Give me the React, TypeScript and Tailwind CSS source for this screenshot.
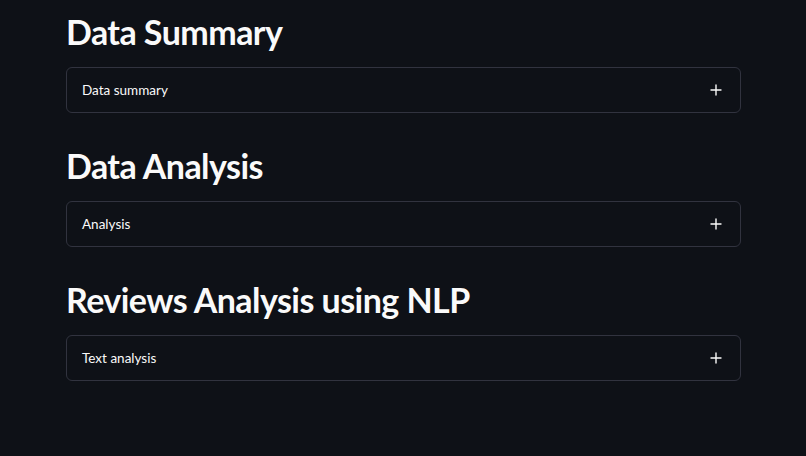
import React from 'react';

const sections = [
  { title: 'Data Summary', label: 'Data summary' },
  { title: 'Data Analysis', label: 'Analysis' },
  { title: 'Reviews Analysis using NLP', label: 'Text analysis' },
];

const PlusIcon = () => (
  <svg width="12" height="12" viewBox="0 0 12 12" fill="none">
    <path d="M6 1v10M1 6h10" stroke="#fafafa" strokeWidth="1.4" strokeLinecap="round" />
  </svg>
);

export default function App() {
  return (
    <div
      className="min-h-[456px] w-full bg-[#0e1117] text-[#fafafa]"
      style={{ fontFamily: '"Source Sans Pro", Lato, "Noto Sans", sans-serif' }}
    >
      <div className="ml-[66px] w-[675px] pt-[9px]">
        {sections.map((s) => (
          <div key={s.title} className="mb-[30px]">
            <h2 className="text-[34px] font-bold leading-[46px] tracking-[-0.55px] mb-[12px]">{s.title}</h2>
            <div className="flex h-[46px] items-center justify-between rounded-[6px] border border-[#31333f] px-[15px]">
              <span className="text-[13.5px]">{s.label}</span>
              <span className="mr-[3px] flex items-center">
                <PlusIcon />
              </span>
            </div>
          </div>
        ))}
      </div>
    </div>
  );
}
